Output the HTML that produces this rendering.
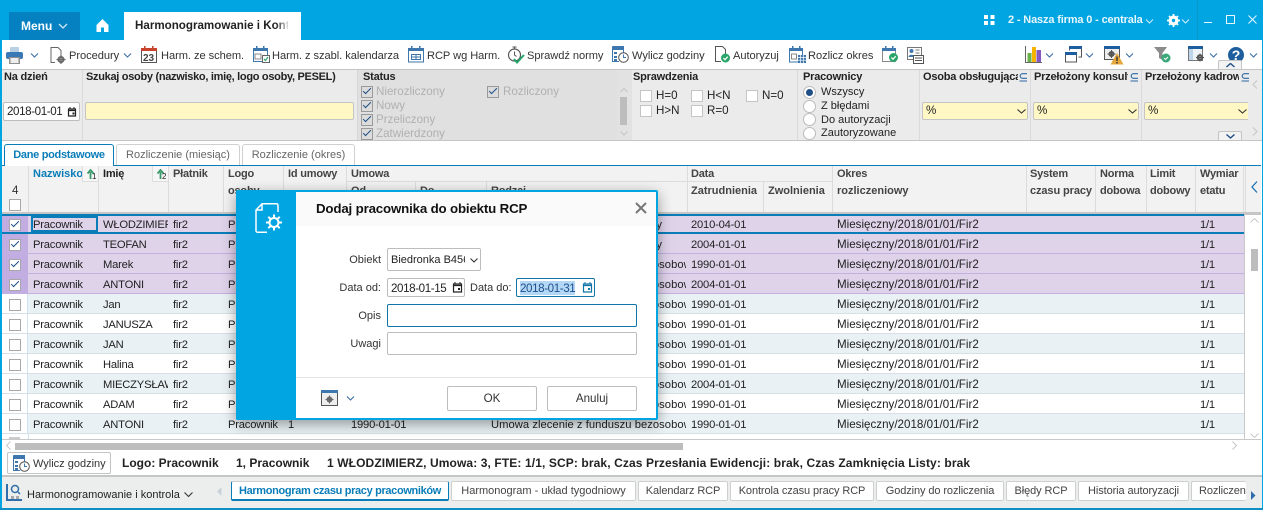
<!DOCTYPE html>
<html lang="pl"><head><meta charset="utf-8"><title>Harmonogramowanie</title>
<style>
html,body{margin:0;padding:0}
body{width:1263px;height:510px;overflow:hidden;position:relative;background:#fff;font:11.6px/14px "Liberation Sans",sans-serif;color:#222}
.a,.t,svg.a{position:absolute}
.t{white-space:nowrap;line-height:14px}
.b{font-weight:bold;font-size:11px;letter-spacing:-.2px}
.tb{font-size:11.1px;letter-spacing:-.05px;top:49px;color:#333}
.d{letter-spacing:-.4px}
.m{font-size:11px}
.cb{position:absolute;width:10px;height:10px;border:1px solid #a8a8a8;background:#fff}
.cb.on::after{content:"";position:absolute;left:1px;top:1px;width:7px;height:3px;border-left:1.8px solid #1f4e87;border-bottom:1.8px solid #1f4e87;transform:rotate(-45deg)}
.st{background:#dcdcdc;border-color:#9a9a9a}
.r{position:absolute;left:2px;width:1242px;height:20px;box-sizing:border-box;border-bottom:1px solid #d6e0e6;background:#fff}
.r.l{background:#e9f1f5}
.r.p{background:#dfd3ea;border-bottom:1px solid #c3afe2}
.r span{position:absolute;top:4px;white-space:nowrap;overflow:hidden;line-height:14px;height:14px;font-size:11.2px;letter-spacing:-.2px}
.r .k{position:absolute;left:0;top:0;width:26px;height:100%;background:#fff;border-right:1px solid #cfe3f3;box-sizing:border-box}
.r.p .k{background:#c2ade3;border-right:none}
.r .cb{left:7px;top:5px}
.n{left:31px;width:66px}.i{left:101px;width:65px}.f{left:171px;width:50px}.lg{left:226px;width:60px}
.r .rd{left:489px;width:195px;letter-spacing:.05px}.z{left:689px;width:70px}
.r .o{left:835px;width:180px;font-size:11.6px;letter-spacing:0}
.e{left:1198px;width:40px}
.r .u{letter-spacing:0}
.h{position:absolute;background:#f2f2f2;border-right:1px solid #dcdcdc;box-sizing:border-box}
.g{color:#444}
.sel{position:absolute;height:18px;top:102px;box-sizing:border-box;background:#fff8c4;border:1px solid #c4c4c4;border-radius:2px}
.tab{position:absolute;top:144px;box-sizing:border-box;border:1px solid #d0d0d0;border-bottom:none;border-radius:3px 3px 0 0;background:#fff;color:#666;text-align:center;line-height:18px;font-size:11px}
.bt{position:absolute;top:481px;height:20px;box-sizing:border-box;border:1px solid #cfcfcf;border-radius:2px;background:#fff;color:#444;text-align:center;line-height:18px;white-space:nowrap;overflow:hidden;font-size:11px;letter-spacing:-.1px}
.inp{position:absolute;box-sizing:border-box;background:#fff;border:1px solid #bdbdbd;border-radius:2px}
.lab{position:absolute;right:882px;white-space:nowrap;color:#333;line-height:14px;font-size:11px}
</style></head><body>

<!-- top bar -->
<div class="a" style="left:0;top:0;width:1263px;height:40px;background:#00a5e2"></div>
<div class="a" style="left:9px;top:12px;width:71px;height:28px;background:#0580c1"></div>
<div class="t b" style="left:21px;top:19px;color:#fff;font-size:12px;letter-spacing:0">Menu</div>
<svg class="a" style="left:58px;top:23px" width="10" height="6"><path d="M1 1l4 4 4-4" fill="none" stroke="#cfe9f6" stroke-width="1.300"/></svg>
<svg class="a" style="left:96px;top:19px" width="13" height="13"><path d="M6.500 0L12.500 6V13H8V8.500H5V13H.5V6z" fill="#fff"/></svg>
<div class="a" style="left:124px;top:12px;width:177px;height:28px;background:#fff"></div>
<div class="t b" style="left:135px;top:19px;width:153px;overflow:hidden;color:#222;font-size:11.6px;letter-spacing:0">Harmonogramowanie i Kontrola</div>
<div class="a" style="left:276px;top:14px;width:14px;height:24px;background:linear-gradient(90deg,rgba(255,255,255,0),#fff)"></div>
<svg class="a" style="left:984px;top:15px" width="11" height="11" fill="#fff"><rect width="4" height="4"/><rect x="6.500" width="4" height="4"/><rect y="6" width="4" height="4"/><rect x="6.500" y="6" width="4" height="4"/></svg>
<div class="t b" style="left:1008px;top:13px;color:#e6f6fd;letter-spacing:-.15px">2 - Nasza firma 0 - centrala</div>
<svg class="a" style="left:1145px;top:19px" width="9" height="5"><path d="M1 .5l3.500 3.500L8 .5" fill="none" stroke="#d5eefa" stroke-width="1"/></svg>
<svg class="a" style="left:1167px;top:14px" width="13" height="13" viewBox="0 0 13 13"><circle cx="6.500" cy="6.500" r="3.500" fill="none" stroke="#fff" stroke-width="3"/><path d="M6.500 0v13M0 6.500h13M2 2l9 9M11 2l-9 9" stroke="#fff" stroke-width="1.800"/><circle cx="6.500" cy="6.500" r="1.700" fill="#00a5e2"/></svg>
<svg class="a" style="left:1181px;top:19px" width="9" height="5"><path d="M1 .5l3.500 3.500L8 .5" fill="none" stroke="#d5eefa" stroke-width="1"/></svg>
<div class="a" style="left:1197px;top:0;width:1px;height:40px;background:#0a96cc"></div>
<div class="a" style="left:1204px;top:22px;width:8px;height:1px;background:#e8f7fd"></div>
<div class="a" style="left:1226px;top:15px;width:7px;height:7px;border:1px solid #e8f7fd"></div>
<svg class="a" style="left:1248px;top:15px" width="9" height="9"><path d="M.5 .5l8 8M8.500 .5l-8 8" stroke="#e8f7fd" stroke-width="1"/></svg>

<!-- page frame -->
<div class="a" style="left:0;top:40px;width:1.500px;height:470px;background:#00a5e2"></div>
<div class="a" style="left:1261.500px;top:40px;width:1.500px;height:470px;background:#00a5e2"></div>

<!-- toolbar -->
<svg class="a" style="left:6px;top:47px" width="17" height="17" viewBox="0 0 17 17"><rect x="4" y="0" width="9" height="6" rx="1" fill="#b9cfe2"/><rect x="0" y="5" width="17" height="7" rx="2" fill="#3a78b6"/><rect x="3" y="10" width="11" height="7" fill="#8f8f8f"/><rect x="4.500" y="11" width="8" height="5" fill="#eee"/></svg>
<svg class="a" style="left:30px;top:53px" width="9" height="5"><path d="M1 .5l3.500 3.500L8 .5" fill="none" stroke="#3b6ea5" stroke-width="1.100"/></svg>
<svg class="a" style="left:50px;top:47px" width="16" height="17" viewBox="0 0 16 17"><path d="M5 15.500H1V.5h7l3 3V8" fill="none" stroke="#666" stroke-width="1"/><circle cx="11" cy="12.500" r="2.500" fill="none" stroke="#666" stroke-width="2"/><path d="M11 8v9M6.500 12.500h9" stroke="#666" stroke-width="1.200"/></svg>
<div class="t tb" style="left:69px">Procedury</div>
<svg class="a" style="left:123px;top:53px" width="9" height="5"><path d="M1 .5l3.500 3.500L8 .5" fill="none" stroke="#3b6ea5" stroke-width="1.100"/></svg>
<svg class="a" style="left:141px;top:46px" width="17" height="17" viewBox="0 0 17 17"><rect x=".5" y="2.500" width="15" height="14" fill="#fff" stroke="#555"/><rect y="2" width="16" height="3" fill="#c8432c"/><rect x="3" y="0" width="1.500" height="3" fill="#c8432c"/><rect x="11" y="0" width="1.500" height="3" fill="#c8432c"/><text x="2" y="15" font-family="Liberation Sans" font-size="10" font-weight="bold" fill="#444">23</text></svg>
<div class="t tb" style="left:161px">Harm. ze schem.</div>
<svg class="a" style="left:253px;top:46px" width="17" height="17" viewBox="0 0 17 17"><rect x=".5" y="2.500" width="14" height="13" fill="#fff" stroke="#3e77ad"/><rect y="2" width="15" height="3" fill="#3e77ad"/><rect x="3" width="1.500" height="3" fill="#3e77ad"/><rect x="10" width="1.500" height="3" fill="#3e77ad"/><rect x="2" y="8" width="6" height="5" fill="none" stroke="#888"/><rect x="9.500" y="9.500" width="7" height="7" fill="#fff" stroke="#666"/><path d="M11 13l1.500 1.500L15 11" fill="none" stroke="#2aa66b" stroke-width="1.200"/></svg>
<div class="t tb" style="left:272px">Harm. z szabl. kalendarza</div>
<svg class="a" style="left:408px;top:46px" width="17" height="17" viewBox="0 0 17 17"><rect x=".5" y="2.500" width="15" height="13.500" fill="#fff" stroke="#3e77ad"/><rect y="2" width="16" height="3" fill="#3e77ad"/><rect x="3" width="1.500" height="3" fill="#3e77ad"/><rect x="11" width="1.500" height="3" fill="#3e77ad"/><path d="M3.500 8.500h9v5h-9zM8 8.500v5M3.500 11h9" fill="none" stroke="#3e77ad"/></svg>
<div class="t tb" style="left:427px">RCP wg Harm.</div>
<svg class="a" style="left:507px;top:46px" width="18" height="18" viewBox="0 0 18 18"><circle cx="7.500" cy="9" r="6" fill="none" stroke="#555" stroke-width="1.200"/><path d="M5.500 1h4M7.500 1v2M7.500 5.500V9l2 1.500" fill="none" stroke="#555"/><path d="M7 13l3 3.500L17 9" fill="none" stroke="#24a468" stroke-width="2"/></svg>
<div class="t tb" style="left:527px">Sprawdź normy</div>
<svg class="a" style="left:612px;top:46px" width="17" height="17" viewBox="0 0 17 17"><path d="M.5 .5h11v7M7 15.500H.5V.5" fill="#fff" stroke="#3e77ad"/><path d="M1 1h10v3H1zM2 6h3v2H2zM2 10h3v2H2zM2 13h3v2H2z" fill="#3e77ad"/><circle cx="11.500" cy="11.500" r="4.800" fill="#fff" stroke="#555"/><path d="M11.500 8.500v3h2.500" fill="none" stroke="#3e77ad"/></svg>
<div class="t tb" style="left:632px">Wylicz godziny</div>
<svg class="a" style="left:715px;top:46px" width="16" height="17" viewBox="0 0 16 17"><path d="M6 15.500H.5V.5h7l3 3V8" fill="none" stroke="#555"/><circle cx="10.500" cy="12" r="4.500" fill="#2aa66b"/><path d="M8.300 12l1.700 1.700 2.700-3" fill="none" stroke="#fff" stroke-width="1.200"/></svg>
<div class="t tb" style="left:733px">Autoryzuj</div>
<svg class="a" style="left:789px;top:46px" width="17" height="17" viewBox="0 0 17 17"><rect x=".5" y="2.500" width="13" height="13.500" fill="#fff" stroke="#3e77ad"/><rect y="2" width="14" height="3" fill="#3e77ad"/><rect x="3" width="1.500" height="3" fill="#3e77ad"/><rect x="10" width="1.500" height="3" fill="#3e77ad"/><rect x="2.500" y="8" width="5" height="5" fill="none" stroke="#888"/><rect x="9" y="9" width="8" height="8" fill="#3e77ad"/><path d="M9 11.500h8M9 14.200h8M11.500 9v8M14.300 9v8" stroke="#fff" stroke-width=".7"/></svg>
<div class="t tb" style="left:808px">Rozlicz okres</div>
<svg class="a" style="left:882px;top:46px" width="17" height="17" viewBox="0 0 17 17"><rect x=".5" y="2.500" width="13" height="13" fill="#fff" stroke="#888"/><rect y="2" width="14" height="3" fill="#3e77ad"/><rect x="3" width="1.500" height="3" fill="#3e77ad"/><rect x="10" width="1.500" height="3" fill="#3e77ad"/><circle cx="11.500" cy="11.500" r="4.500" fill="#2aa66b"/><path d="M9.300 11.500l1.700 1.700 2.700-3" fill="none" stroke="#fff" stroke-width="1.200"/></svg>
<svg class="a" style="left:907px;top:47px" width="17" height="17" viewBox="0 0 17 17"><rect x=".5" y=".5" width="14" height="12" fill="#fff" stroke="#777"/><circle cx="4.500" cy="4" r="2" fill="#3e77ad"/><path d="M1.500 10c0-3 6-3 6 0z" fill="#3e77ad"/><path d="M8.500 3h4M8.500 6h4" stroke="#777"/><rect x="6.500" y="8.500" width="10" height="8" fill="#fff" stroke="#555"/><path d="M8 11h7M8 13.500h7" stroke="#555"/></svg>

<svg class="a" style="left:1025px;top:46px" width="17" height="17" viewBox="0 0 17 17"><path d="M.5 0v16.500H17" fill="none" stroke="#666"/><rect x="2.500" y="7" width="4" height="9" fill="#6cb24a"/><rect x="7" y="1" width="4" height="15" fill="#f4b400"/><rect x="11.500" y="4" width="4.500" height="12" fill="#8759c0"/></svg>
<svg class="a" style="left:1045px;top:53px" width="9" height="5"><path d="M1 .5l3.500 3.500L8 .5" fill="none" stroke="#3b6ea5" stroke-width="1.100"/></svg>
<svg class="a" style="left:1065px;top:46px" width="17" height="17" viewBox="0 0 17 17"><path d="M4.500 4.500V.5h12v10.500h-3" fill="none" stroke="#555"/><rect x="4" width="13" height="3" fill="#1f5e9e"/><rect x=".5" y="6.500" width="11" height="9.500" fill="#fff" stroke="#555"/><rect y="6" width="12" height="3" fill="#1f5e9e"/></svg>
<svg class="a" style="left:1085px;top:53px" width="9" height="5"><path d="M1 .5l3.500 3.500L8 .5" fill="none" stroke="#3b6ea5" stroke-width="1.100"/></svg>
<svg class="a" style="left:1104px;top:46px" width="20" height="19" viewBox="0 0 20 19"><rect x=".5" y=".5" width="15" height="13" fill="#eee" stroke="#555"/><rect width="16" height="3" fill="#1f5e9e"/><circle cx="7.500" cy="8" r="2" fill="none" stroke="#555" stroke-width="2"/><path d="M7.500 4v8M3.500 8h8" stroke="#555"/><path d="M13 7l6.500 11.500h-13z" fill="#e6a83a"/><path d="M13 10.500v4.500M13 16v1.500" stroke="#333" stroke-width="1.400"/></svg>
<svg class="a" style="left:1125px;top:53px" width="9" height="5"><path d="M1 .5l3.500 3.500L8 .5" fill="none" stroke="#3b6ea5" stroke-width="1.100"/></svg>
<svg class="a" style="left:1154px;top:47px" width="17" height="16" viewBox="0 0 17 16"><path d="M0 0h13L8.500 6v7L5 11V6z" fill="#8b8b8b"/><circle cx="12" cy="11" r="4.500" fill="#3aa77a"/><path d="M10 11l1.500 1.500 2.500-2.500" fill="none" stroke="#fff"/></svg>
<svg class="a" style="left:1188px;top:46px" width="18" height="17" viewBox="0 0 18 17"><rect x=".5" y=".5" width="14" height="14" fill="#eef3f8" stroke="#777"/><rect width="15" height="3" fill="#1f5e9e"/><rect x="1" y="3" width="4" height="11" fill="#bfd6ea"/><circle cx="12" cy="11.500" r="2.300" fill="none" stroke="#555" stroke-width="2"/><path d="M12 7.500v8M8 11.500h8" stroke="#555"/></svg>
<svg class="a" style="left:1209px;top:53px" width="9" height="5"><path d="M1 .5l3.500 3.500L8 .5" fill="none" stroke="#3b6ea5" stroke-width="1.100"/></svg>
<div class="a" style="left:1228px;top:47px;width:16px;height:16px;border-radius:50%;background:#1f5e9e;color:#fff;text-align:center;font-size:14px;line-height:16px;font-weight:bold">?</div>
<svg class="a" style="left:1249px;top:53px" width="9" height="5"><path d="M1 .5l3.500 3.500L8 .5" fill="none" stroke="#3b6ea5" stroke-width="1.100"/></svg>

<!-- filter panel -->
<div class="a" style="left:1.500px;top:69px;width:1260px;height:72px;box-sizing:border-box;background:#ebebeb;border-top:1px solid #c4c4c4;border-bottom:1px solid #c4c4c4"></div>
<div class="a" style="left:358px;top:70px;width:274px;height:70px;background:#e0e0e0"></div>
<div class="a" style="left:82px;top:70px;width:1px;height:70px;background:#dadada"></div>
<div class="a" style="left:357px;top:70px;width:1px;height:70px;background:#d5d5d5"></div>
<div class="a" style="left:797px;top:70px;width:1px;height:70px;background:#dadada"></div>
<div class="a" style="left:919px;top:70px;width:1px;height:70px;background:#dadada"></div>
<div class="a" style="left:1030px;top:70px;width:1px;height:70px;background:#dadada"></div>
<div class="a" style="left:1141px;top:70px;width:1px;height:70px;background:#dadada"></div>
<div class="t b" style="left:4px;top:70px">Na dzień</div>
<div class="t b" style="left:86px;top:70px;letter-spacing:-.3px">Szukaj osoby (nazwisko, imię, logo osoby, PESEL)</div>
<div class="inp" style="left:3px;top:102px;width:77px;height:19px"></div>
<div class="t d" style="left:7px;top:105px">2018-01-01</div>
<svg class="a" style="left:67px;top:107px" width="11" height="11"><path d="M1.500 2h7v7h-7zM1 3.500h8" fill="none" stroke="#222" stroke-width="1.200"/><path d="M3 0v2M7 0v2" stroke="#222"/><rect x="5.500" y="5.500" width="2" height="2" fill="#222"/></svg>
<div class="sel" style="left:85px;width:269px"></div>

<div class="t b" style="left:363px;top:70px">Status</div>
<div class="cb on st" style="left:361px;top:86px"></div><div class="t" style="left:376px;top:85px;color:#b0b0b0">Nierozliczony</div>
<div class="cb on st" style="left:361px;top:100px"></div><div class="t" style="left:376px;top:99px;color:#b0b0b0">Nowy</div>
<div class="cb on st" style="left:361px;top:114px"></div><div class="t" style="left:376px;top:113px;color:#b0b0b0">Przeliczony</div>
<div class="cb on st" style="left:361px;top:128px"></div><div class="t" style="left:376px;top:127px;color:#b0b0b0">Zatwierdzony</div>
<div class="cb on st" style="left:487px;top:86px"></div><div class="t" style="left:503px;top:85px;color:#b0b0b0">Rozliczony</div>
<div class="a" style="left:617px;top:70px;width:15px;height:70px;background:#e2e2e2"></div>
<div class="a" style="left:620px;top:97px;width:7px;height:28px;background:#bdbdbd"></div>
<svg class="a" style="left:620px;top:88px" width="8" height="5"><path d="M.5 4L4 .5 7.500 4" fill="none" stroke="#c5c5c5"/></svg>
<svg class="a" style="left:620px;top:131px" width="8" height="5"><path d="M.5 .5L4 4 7.500 .5" fill="none" stroke="#c5c5c5"/></svg>

<div class="t b" style="left:633px;top:70px">Sprawdzenia</div>
<div class="cb" style="left:640px;top:90px;border-color:#c4c4c4"></div><div class="t" style="left:656px;top:89px">H=0</div>
<div class="cb" style="left:691px;top:90px;border-color:#c4c4c4"></div><div class="t" style="left:707px;top:89px">H&lt;N</div>
<div class="cb" style="left:746px;top:90px;border-color:#c4c4c4"></div><div class="t" style="left:762px;top:89px">N=0</div>
<div class="cb" style="left:640px;top:105px;border-color:#c4c4c4"></div><div class="t" style="left:656px;top:104px">H&gt;N</div>
<div class="cb" style="left:691px;top:105px;border-color:#c4c4c4"></div><div class="t" style="left:707px;top:104px">R=0</div>

<div class="t b" style="left:803px;top:70px">Pracownicy</div>
<div class="a" style="left:803px;top:86px;width:11px;height:11px;border:1px solid #bbb;border-radius:50%;background:#fff"></div><div class="a" style="left:806px;top:89px;width:7px;height:7px;border-radius:50%;background:#1f4e87"></div><div class="t m" style="left:821px;top:85px">Wszyscy</div>
<div class="a" style="left:803px;top:100px;width:11px;height:11px;border:1px solid #bbb;border-radius:50%;background:#fff"></div><div class="t m" style="left:821px;top:99px">Z błędami</div>
<div class="a" style="left:803px;top:113px;width:11px;height:11px;border:1px solid #bbb;border-radius:50%;background:#fff"></div><div class="t m" style="left:821px;top:113px">Do autoryzacji</div>
<div class="a" style="left:803px;top:127px;width:11px;height:11px;border:1px solid #bbb;border-radius:50%;background:#fff"></div><div class="t m" style="left:821px;top:126px">Zautoryzowane</div>

<div class="t b" style="left:923px;top:70px;width:95px;overflow:hidden">Osoba obsługująca</div>
<div class="t b" style="left:1034px;top:70px;width:94px;overflow:hidden">Przełożony konsultant</div>
<div class="t b" style="left:1145px;top:70px;width:94px;overflow:hidden">Przełożony kadrowy</div>
<svg class="a" style="left:1019px;top:73px" width="9" height="9"><path d="M8 .7H3.500a2.300 2.300 0 0 0 0 4.600H8M.5 8H8" fill="none" stroke="#2c6aa6" stroke-width="1.100"/></svg>
<svg class="a" style="left:1130px;top:73px" width="9" height="9"><path d="M8 .7H3.500a2.300 2.300 0 0 0 0 4.600H8M.5 8H8" fill="none" stroke="#2c6aa6" stroke-width="1.100"/></svg>
<svg class="a" style="left:1241px;top:73px" width="9" height="9"><path d="M8 .7H3.500a2.300 2.300 0 0 0 0 4.600H8M.5 8H8" fill="none" stroke="#2c6aa6" stroke-width="1.100"/></svg>
<div class="sel" style="left:922px;width:106px"></div><div class="t" style="left:926px;top:104px">%</div>
<div class="sel" style="left:1033px;width:106px"></div><div class="t" style="left:1037px;top:104px">%</div>
<div class="sel" style="left:1144px;width:104px;border-right:none;border-radius:2px 0 0 2px"></div><div class="t" style="left:1148px;top:104px">%</div>
<svg class="a" style="left:1017px;top:109px" width="9" height="5"><path d="M.5 .5L4.500 4 8.500 .5" fill="none" stroke="#333" stroke-width="1.100"/></svg>
<svg class="a" style="left:1128px;top:109px" width="9" height="5"><path d="M.5 .5L4.500 4 8.500 .5" fill="none" stroke="#333" stroke-width="1.100"/></svg>
<svg class="a" style="left:1238px;top:109px" width="9" height="5"><path d="M.5 .5L4.500 4 8.500 .5" fill="none" stroke="#333" stroke-width="1.100"/></svg>
<svg class="a" style="left:1252px;top:80px" width="6" height="9"><path d="M5 .5L1 4.500 5 8.500" fill="none" stroke="#c8c8c8" stroke-width="1.200"/></svg>
<svg class="a" style="left:1252px;top:127px" width="6" height="9"><path d="M1 .5L5 4.500 1 8.500" fill="none" stroke="#c8c8c8" stroke-width="1.200"/></svg>
<div class="a" style="left:1218px;top:60px;width:24px;height:9px;box-sizing:border-box;border:1px solid #c4c4c4;border-bottom:none;background:#f3f3f3;border-radius:2px 2px 0 0"></div>
<svg class="a" style="left:1226px;top:63px" width="9" height="5"><path d="M.5 4L4.500 .5 8.500 4" fill="none" stroke="#1f4e87" stroke-width="1.400"/></svg>
<div class="a" style="left:1218px;top:131px;width:24px;height:9px;box-sizing:border-box;border:1px solid #c4c4c4;border-bottom:none;background:#f3f3f3;border-radius:2px 2px 0 0"></div>
<svg class="a" style="left:1226px;top:134px" width="9" height="5"><path d="M.5 .5L4.500 4 8.500 .5" fill="none" stroke="#1f4e87" stroke-width="1.400"/></svg>

<!-- sub tabs -->
<div class="tab b" style="left:4px;width:110px;height:22px;border:1px solid #0a7db8;border-bottom:none;color:#0a7db8;z-index:3;letter-spacing:-.3px;line-height:21px">Dane podstawowe</div>
<div class="tab" style="left:116px;width:124px;height:21px;line-height:20px">Rozliczenie (miesiąc)</div>
<div class="tab" style="left:242px;width:113px;height:21px;line-height:20px">Rozliczenie (okres)</div>
<div class="a" style="left:2px;top:165px;width:1259px;height:1px;background:#0a7db8"></div>

<!-- grid header -->
<div class="a" style="left:2px;top:166px;width:1259px;height:49px;background:#f2f2f2;border-bottom:3px solid #c6c6c6;box-sizing:border-box"></div>
<div class="h" style="left:2px;top:166px;width:27px;height:46px"></div>
<div class="h" style="left:29px;top:166px;width:70px;height:46px"></div>
<div class="h" style="left:99px;top:166px;width:70px;height:46px"></div>
<div class="h" style="left:169px;top:166px;width:55px;height:46px"></div>
<div class="h" style="left:224px;top:166px;width:60px;height:46px"></div>
<div class="h" style="left:284px;top:166px;width:63px;height:46px"></div>
<div class="h" style="left:347px;top:166px;width:341px;height:16px;border-bottom:1px solid #dcdcdc"></div>
<div class="h" style="left:347px;top:182px;width:69px;height:30px"></div>
<div class="h" style="left:416px;top:182px;width:71px;height:30px"></div>
<div class="h" style="left:487px;top:182px;width:201px;height:30px"></div>
<div class="h" style="left:688px;top:166px;width:145px;height:16px;border-bottom:1px solid #dcdcdc"></div>
<div class="h" style="left:688px;top:182px;width:76px;height:30px"></div>
<div class="h" style="left:764px;top:182px;width:69px;height:30px"></div>
<div class="h" style="left:833px;top:166px;width:194px;height:46px"></div>
<div class="h" style="left:1027px;top:166px;width:69px;height:46px"></div>
<div class="h" style="left:1096px;top:166px;width:51px;height:46px"></div>
<div class="h" style="left:1147px;top:166px;width:49px;height:46px"></div>
<div class="h" style="left:1196px;top:166px;width:48px;height:46px"></div>
<div class="a" style="left:1245px;top:166px;width:1px;height:46px;background:#dcdcdc"></div>
<div class="t" style="left:12px;top:184px;color:#333">4</div>
<div class="cb" style="left:9px;top:199px"></div>
<div class="t b" style="left:33px;top:167px;color:#0a7db8;width:49px;overflow:hidden;letter-spacing:0">Nazwisko</div>
<div class="a" style="left:82px;top:166px;width:16px;height:16px;background:#f6f6f6;border-left:1px solid #ddd;border-bottom:1px solid #ddd;box-sizing:border-box"></div>
<svg class="a" style="left:87px;top:169px" width="10" height="12"><path d="M3.500 10V3M.5 4.500L3.500 1 6.500 4.500" fill="none" stroke="#3b9a6b" stroke-width="1.800"/></svg><div class="t" style="left:92px;top:172px;font-size:8px;line-height:10px">1</div>
<div class="t b" style="left:103px;top:167px">Imię</div>
<div class="a" style="left:152px;top:166px;width:16px;height:16px;background:#f6f6f6;border-left:1px solid #ddd;border-bottom:1px solid #ddd;box-sizing:border-box"></div>
<svg class="a" style="left:157px;top:169px" width="10" height="12"><path d="M3.500 10V3M.5 4.500L3.500 1 6.500 4.500" fill="none" stroke="#3b9a6b" stroke-width="1.800"/></svg><div class="t" style="left:162px;top:172px;font-size:8px;line-height:10px">2</div>
<div class="t b g" style="left:173px;top:167px">Płatnik</div>
<div class="t b g" style="left:228px;top:167px">Logo</div>
<div class="t b g" style="left:228px;top:184px">osoby</div>
<div class="t b g" style="left:288px;top:167px">Id umowy</div>
<div class="t b g" style="left:351px;top:167px">Umowa</div>
<div class="t b g" style="left:351px;top:184px">Od</div>
<div class="t b g" style="left:420px;top:184px">Do</div>
<div class="t b g" style="left:491px;top:184px">Rodzaj</div>
<div class="t b g" style="left:691px;top:167px">Data</div>
<div class="t b g" style="left:691px;top:184px;letter-spacing:0">Zatrudnienia</div>
<div class="t b g" style="left:768px;top:184px;letter-spacing:0">Zwolnienia</div>
<div class="t b g" style="left:837px;top:167px">Okres</div>
<div class="t b g" style="left:837px;top:184px;letter-spacing:0">rozliczeniowy</div>
<div class="t b g" style="left:1030px;top:167px">System</div>
<div class="t b g" style="left:1030px;top:184px;letter-spacing:-.1px">czasu pracy</div>
<div class="t b g" style="left:1100px;top:167px">Norma</div>
<div class="t b g" style="left:1100px;top:184px">dobowa</div>
<div class="t b g" style="left:1150px;top:167px">Limit</div>
<div class="t b g" style="left:1150px;top:184px">dobowy</div>
<div class="t b g" style="left:1200px;top:167px">Wymiar</div>
<div class="t b g" style="left:1200px;top:184px">etatu</div>
<svg class="a" style="left:1251px;top:181px" width="7" height="12"><path d="M6 .5L1 6l5 5.500" fill="none" stroke="#1f6fb2" stroke-width="1.300"/></svg>

<!-- rows -->
<div class="r p" style="top:214px;border-top:2px solid #0a7db8;border-bottom:2px solid #0a7db8"><div class="k"></div><div class="cb on" style="top:3px"></div><span class="n" style="top:2px">Pracownik</span><span class="i" style="top:2px">WŁODZIMIERZ</span><span class="f" style="top:2px">fir2</span><span class="lg" style="top:2px">Pracownik</span><span class="rd u" style="top:2px">Umowa o pracę na czas określony</span><span class="z" style="top:2px">2010-04-01</span><span class="o" style="top:2px">Miesięczny/2018/01/01/Fir2</span><span class="e" style="top:2px">1/1</span></div>
<div class="a" style="left:31px;top:216px;width:67px;height:16px;box-sizing:border-box;border:2px solid #0a7db8"></div>
<div class="r p" style="top:234px"><div class="k"></div><div class="cb on"></div><span class="n">Pracownik</span><span class="i">TEOFAN</span><span class="f">fir2</span><span class="lg">Pracownik</span><span class="rd u">Umowa o pracę na czas określony</span><span class="z">2004-01-01</span><span class="o">Miesięczny/2018/01/01/Fir2</span><span class="e">1/1</span></div>
<div class="r p" style="top:254px"><div class="k"></div><div class="cb on"></div><span class="n">Pracownik</span><span class="i">Marek</span><span class="f">fir2</span><span class="lg">Pracownik</span><span class="rd">Umowa zlecenie z funduszu bezosobowego</span><span class="z">1990-01-01</span><span class="o">Miesięczny/2018/01/01/Fir2</span><span class="e">1/1</span></div>
<div class="r p" style="top:274px"><div class="k"></div><div class="cb on"></div><span class="n">Pracownik</span><span class="i">ANTONI</span><span class="f">fir2</span><span class="lg">Pracownik</span><span class="rd">Umowa zlecenie z funduszu bezosobowego</span><span class="z">2004-01-01</span><span class="o">Miesięczny/2018/01/01/Fir2</span><span class="e">1/1</span></div>
<div class="r l" style="top:294px"><div class="k"></div><div class="cb"></div><span class="n">Pracownik</span><span class="i">Jan</span><span class="f">fir2</span><span class="lg">Pracownik</span><span class="rd">Umowa zlecenie z funduszu bezosobowego</span><span class="z">1990-01-01</span><span class="o">Miesięczny/2018/01/01/Fir2</span><span class="e">1/1</span></div>
<div class="r" style="top:314px"><div class="k"></div><div class="cb"></div><span class="n">Pracownik</span><span class="i">JANUSZA</span><span class="f">fir2</span><span class="lg">Pracownik</span><span class="rd">Umowa zlecenie z funduszu bezosobowego</span><span class="z">1990-01-01</span><span class="o">Miesięczny/2018/01/01/Fir2</span><span class="e">1/1</span></div>
<div class="r l" style="top:334px"><div class="k"></div><div class="cb"></div><span class="n">Pracownik</span><span class="i">JAN</span><span class="f">fir2</span><span class="lg">Pracownik</span><span class="rd">Umowa zlecenie z funduszu bezosobowego</span><span class="z">1990-01-01</span><span class="o">Miesięczny/2018/01/01/Fir2</span><span class="e">1/1</span></div>
<div class="r" style="top:354px"><div class="k"></div><div class="cb"></div><span class="n">Pracownik</span><span class="i">Halina</span><span class="f">fir2</span><span class="lg">Pracownik</span><span class="rd">Umowa zlecenie z funduszu bezosobowego</span><span class="z">1990-01-01</span><span class="o">Miesięczny/2018/01/01/Fir2</span><span class="e">1/1</span></div>
<div class="r l" style="top:374px"><div class="k"></div><div class="cb"></div><span class="n">Pracownik</span><span class="i">MIECZYSŁAW</span><span class="f">fir2</span><span class="lg">Pracownik</span><span class="rd">Umowa zlecenie z funduszu bezosobowego</span><span class="z">2004-01-01</span><span class="o">Miesięczny/2018/01/01/Fir2</span><span class="e">1/1</span></div>
<div class="r" style="top:394px"><div class="k"></div><div class="cb"></div><span class="n">Pracownik</span><span class="i">ADAM</span><span class="f">fir2</span><span class="lg">Pracownik</span><span class="rd">Umowa zlecenie z funduszu bezosobowego</span><span class="z">1990-01-01</span><span class="o">Miesięczny/2018/01/01/Fir2</span><span class="e">1/1</span></div>
<div class="r l" style="top:414px"><div class="k"></div><div class="cb"></div><span class="n">Pracownik</span><span class="i">ANTONI</span><span class="f">fir2</span><span class="lg">Pracownik</span><span style="left:286px">1</span><span style="left:349px">1990-01-01</span><span class="rd">Umowa zlecenie z funduszu bezosobowego</span><span class="z">1990-01-01</span><span class="o">Miesięczny/2018/01/01/Fir2</span><span class="e">1/1</span></div>
<div class="a" style="left:2px;top:434px;width:1242px;height:5px;background:#fff"></div>
<div class="a" style="left:9px;top:437px;width:11px;height:2px;background:#ccc"></div>
<div class="a" style="left:28px;top:434px;width:1px;height:5px;background:#cfe3f3"></div>
<div class="a" style="left:2px;top:439px;width:1259px;height:1px;background:#c8c8c8"></div>
<div class="a" style="left:1244px;top:214px;width:1px;height:225px;background:#c8c8c8"></div>
<!-- vertical scroll -->
<div class="a" style="left:1251px;top:249px;width:7px;height:22px;background:#bdbdbd"></div>
<svg class="a" style="left:1250px;top:218px" width="9" height="5"><path d="M.5 4.500L4.500 .5 8.500 4.500" fill="none" stroke="#c8c8c8"/></svg>
<svg class="a" style="left:1250px;top:433px" width="9" height="5"><path d="M.5 .5L4.500 4.500 8.500 .5" fill="none" stroke="#c8c8c8"/></svg>
<!-- horizontal scroll -->
<svg class="a" style="left:6px;top:441px" width="5" height="9"><path d="M4.500 .5L.5 4.500l4 4" fill="none" stroke="#c8c8c8"/></svg>
<div class="a" style="left:15px;top:443px;width:668px;height:7px;background:#bdbdbd"></div>
<svg class="a" style="left:1232px;top:441px" width="5" height="9"><path d="M.5 .5l4 4-4 4" fill="none" stroke="#c8c8c8"/></svg>

<!-- status line -->
<div class="a" style="left:7px;top:452px;width:104px;height:22px;box-sizing:border-box;border:1px solid #c4c4c4;border-radius:2px;background:#fff"></div>
<svg class="a" style="left:13px;top:455px" width="17" height="17" viewBox="0 0 17 17"><path d="M.5 .5h11v7M7 15.500H.5V.5" fill="#fff" stroke="#3e77ad"/><path d="M1 1h10v3H1zM2 6h3v2H2zM2 10h3v2H2zM2 13h3v2H2z" fill="#3e77ad"/><circle cx="11.500" cy="11.500" r="4.800" fill="#fff" stroke="#555"/><path d="M11.500 8.500v3h2.500" fill="none" stroke="#3e77ad"/></svg>
<div class="t m" style="left:33px;top:457px;color:#333">Wylicz godziny</div>
<div class="t b" style="left:122px;top:456px;font-size:12px;letter-spacing:0">Logo: Pracownik</div>
<div class="t b" style="left:236px;top:456px;font-size:12px;letter-spacing:0">1, Pracownik</div>
<div class="t b" style="left:327px;top:456px;font-size:12px;letter-spacing:.11px">1 WŁODZIMIERZ, Umowa: 3, FTE: 1/1, SCP: brak, Czas Przesłania Ewidencji: brak, Czas Zamknięcia Listy: brak</div>

<!-- bottom bar -->
<div class="a" style="left:1.500px;top:475px;width:1260px;height:33px;background:#eceeee;border-top:2px solid #c6c6c6;box-sizing:border-box"></div>
<div class="a" style="left:0;top:508px;width:1263px;height:2px;background:#0f8fc4"></div>
<svg class="a" style="left:6px;top:484px" width="17" height="17" viewBox="0 0 17 17"><path d="M1 0v16h15" fill="none" stroke="#2f6eaa" stroke-width="2"/><circle cx="9" cy="5" r="3.500" fill="none" stroke="#2f6eaa" stroke-width="1.500"/><path d="M12 8l2 2" stroke="#2f6eaa" stroke-width="1.500"/><rect x="5" y="12" width="3" height="3" fill="#aaa"/><rect x="10" y="12" width="3" height="3" fill="#aaa"/></svg>
<div class="t m" style="left:27px;top:488px">Harmonogramowanie i kontrola</div>
<svg class="a" style="left:184px;top:492px" width="9" height="6"><path d="M.5 .5L4.500 4.500 8.500 .5" fill="none" stroke="#333" stroke-width="1.100"/></svg>
<svg class="a" style="left:217px;top:487px" width="5" height="9"><path d="M4.500 0L0 4.500 4.500 9z" fill="#c8d2d8"/></svg>
<div class="bt" style="left:231px;width:218px;border-color:#0a7db8;border-bottom-width:2px;color:#0a7db8;border-top-color:#cfcfcf;font-weight:bold;letter-spacing:-.34px">Harmonogram czasu pracy pracowników</div>
<div class="bt" style="left:451px;width:185px;letter-spacing:0">Harmonogram - układ tygodniowy</div>
<div class="bt" style="left:638px;width:90px">Kalendarz RCP</div>
<div class="bt" style="left:730px;width:144px">Kontrola czasu pracy RCP</div>
<div class="bt" style="left:876px;width:128px">Godziny do rozliczenia</div>
<div class="bt" style="left:1006px;width:70px">Błędy RCP</div>
<div class="bt" style="left:1078px;width:111px">Historia autoryzacji</div>
<div class="bt" style="left:1191px;width:55px;border-right:none;text-align:left;padding-left:7px">Rozliczenie</div>
<svg class="a" style="left:1251px;top:491px" width="5" height="9"><path d="M0 0l4.500 4.500L0 9z" fill="#2f6eaa"/></svg>

<!-- dialog -->
<div class="a" style="left:236px;top:190px;width:422px;height:230px;box-sizing:border-box;background:#fff;border:2px solid #00a5e2;border-radius:2px;box-shadow:0 4px 14px rgba(0,0,0,.38)"></div>
<div class="a" style="left:236px;top:190px;width:60px;height:230px;background:#00a5e2;border-radius:2px 0 0 2px"></div>
<div class="a" style="left:296px;top:192px;width:360px;height:34px;background:#fafafa"></div>
<svg class="a" style="left:255px;top:203px" width="29" height="31" viewBox="0 0 29 31"><path d="M7 .8h14.500a1.500 1.500 0 0 1 1.500 1.500V9M12 29.200H2.500A1.500 1.500 0 0 1 1 27.700V7L7 .8V7H1" fill="none" stroke="#fff" stroke-width="1.500"/><circle cx="19" cy="19.500" r="4.500" fill="none" stroke="#fff" stroke-width="2"/><path d="M19 11.500v3.500M19 24v3.500M11 19.500h3.500M23.500 19.500H27M13.300 13.800l2.500 2.500M22.200 22.700l2.500 2.500M24.700 13.800l-2.500 2.500M15.800 22.700l-2.500 2.500" stroke="#fff" stroke-width="2"/></svg>
<div class="t" style="left:316px;top:201px;font-size:13.3px;font-weight:bold;letter-spacing:-.17px;line-height:16px;color:#111">Dodaj pracownika do obiektu RCP</div>
<svg class="a" style="left:635px;top:202px" width="12" height="12"><path d="M1 1l10 10M11 1L1 11" stroke="#777" stroke-width="2"/></svg>
<div class="lab" style="top:253px">Obiekt</div>
<div class="inp" style="left:387px;top:248px;width:94px;height:23px"></div>
<div class="t m" style="left:391px;top:253px;width:74px;overflow:hidden">Biedronka B456</div>
<svg class="a" style="left:470px;top:258px" width="8" height="5"><path d="M.5 .5L4 4 7.500 .5" fill="none" stroke="#333" stroke-width="1.100"/></svg>
<div class="lab" style="top:281px">Data od:</div>
<div class="inp" style="left:387px;top:278px;width:78px;height:19px"></div>
<div class="t d" style="left:391px;top:282px">2018-01-15</div>
<svg class="a" style="left:452px;top:282px" width="11" height="11"><path d="M1.500 2h8v8h-8zM1 3.500h9" fill="none" stroke="#222" stroke-width="1.200"/><path d="M3 0v2M8 0v2" stroke="#222"/><rect x="6" y="6" width="2" height="2" fill="#222"/></svg>
<div class="t m" style="left:470px;top:281px;color:#333">Data do:</div>
<div class="inp" style="left:516px;top:278px;width:79px;height:19px;border-color:#0f75a8"></div>
<div class="a" style="left:520px;top:281px;width:55px;height:14px;background:#b3d7f7"></div>
<div class="t d" style="left:520px;top:282px;color:#1f4e87">2018-01-31</div>
<svg class="a" style="left:582px;top:282px" width="11" height="11"><path d="M1.500 2h8v8h-8zM1 3.500h9" fill="none" stroke="#0f75a8" stroke-width="1.200"/><path d="M3 0v2M8 0v2" stroke="#0f75a8"/><rect x="6" y="6" width="2" height="2" fill="#0f75a8"/></svg>
<div class="lab" style="top:309px">Opis</div>
<div class="inp" style="left:387px;top:304px;width:250px;height:23px;border-color:#0f75a8"></div>
<div class="lab" style="top:337px">Uwagi</div>
<div class="inp" style="left:387px;top:332px;width:250px;height:23px"></div>
<div class="a" style="left:296px;top:377px;width:360px;height:1px;background:#e2e2e2"></div>
<svg class="a" style="left:321px;top:390px" width="17" height="16" viewBox="0 0 17 16"><rect x=".5" y=".5" width="16" height="15" fill="#eee" stroke="#555"/><rect width="17" height="3" fill="#3e77ad"/><circle cx="8.500" cy="9.500" r="2" fill="none" stroke="#666" stroke-width="2"/><path d="M8.500 5.500v8M4.500 9.500h8" stroke="#666"/></svg>
<svg class="a" style="left:346px;top:396px" width="9" height="5"><path d="M1 .5l3.500 3.500L8 .5" fill="none" stroke="#3b6ea5" stroke-width="1.100"/></svg>
<div class="inp" style="left:447px;top:386px;width:90px;height:25px;text-align:center;line-height:23px;color:#333">OK</div>
<div class="inp" style="left:547px;top:386px;width:90px;height:25px;text-align:center;line-height:23px;color:#333">Anuluj</div>
</body></html>
